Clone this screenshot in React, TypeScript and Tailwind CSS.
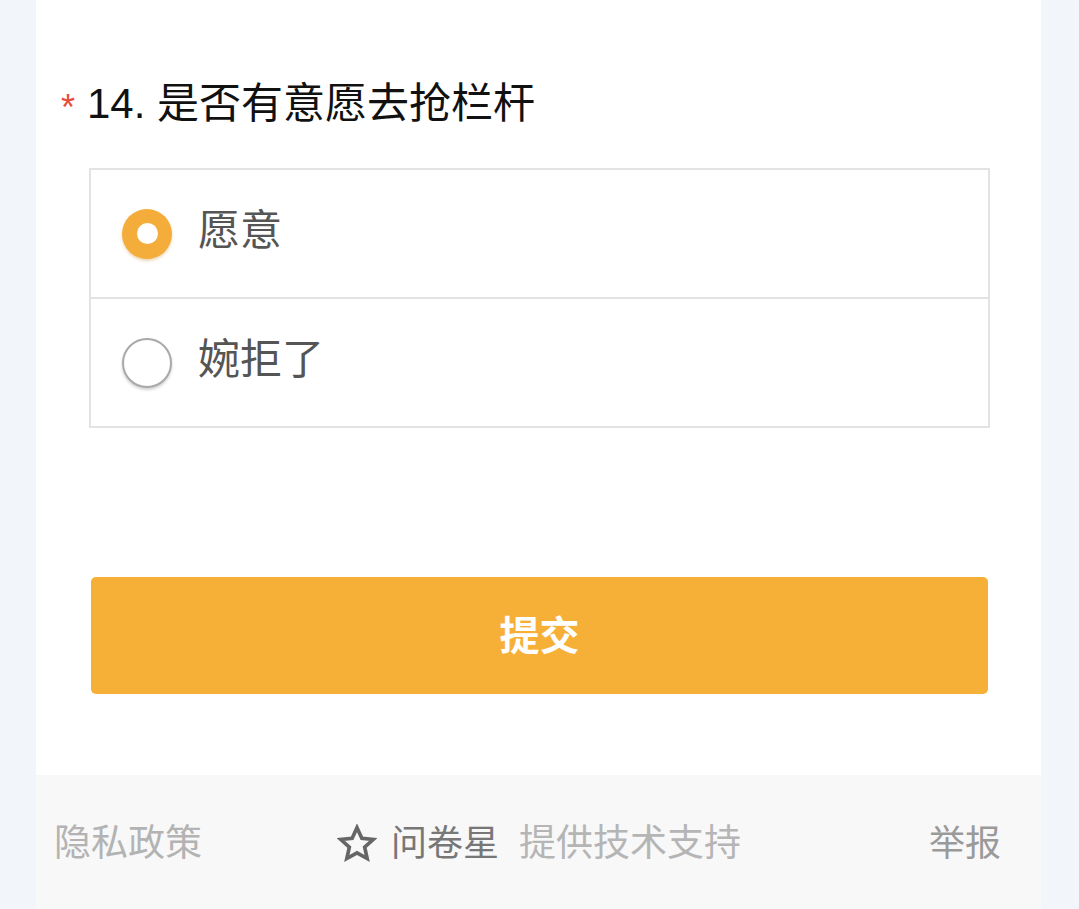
import React from "react";

const font = { fontFamily: '"Liberation Sans", "Noto Sans CJK SC", sans-serif' };

function Star() {
  return (
    <svg width="40" height="40" viewBox="0 0 24 24" className="shrink-0">
      <path
        d="M12 2.2l2.9 6.4 6.8.7-5.1 4.6 1.5 6.8L12 17.3l-6.1 3.4 1.5-6.8-5.1-4.6 6.8-.7z"
        fill="none"
        stroke="#666"
        strokeWidth="2.2"
        strokeLinejoin="miter"
      />
    </svg>
  );
}

export default function App() {
  return (
    <div className="w-[1079px] h-[909px] bg-[#f2f5f9] overflow-hidden" style={font}>
      <div className="ml-[36px] w-[1005px] h-[909px] bg-white flex flex-col">
        <div className="flex-1 flex flex-col">
          <div className="flex items-center pt-[80px] pl-[25px] h-[128px]">
            <span className="text-[36px] leading-none text-[#e84c3d] mr-[12px] mt-[8px]">*</span>
            <span className="text-[42px] leading-[48px] text-[#111]">14. 是否有意愿去抢栏杆</span>
          </div>
          <div className="ml-[53px] mt-[40px] w-[901px] border-2 border-[#e3e3e3]">
            <div className="h-[129px] flex items-center pl-[31px] border-b-2 border-[#e3e3e3]">
              <div className="w-[50px] h-[50px] rounded-full bg-[#f4ac3a] flex items-center justify-center shadow-[0_2px_3px_rgba(200,140,40,0.35)]">
                <div className="w-[21px] h-[21px] rounded-full bg-white" />
              </div>
              <span className="ml-[26px] mb-[6px] text-[42px] leading-none text-[#555]">愿意</span>
            </div>
            <div className="h-[127px] flex items-center pl-[31px]">
              <div className="w-[50px] h-[50px] rounded-full border-2 border-[#a9a9a9] bg-white shadow-[0_2px_3px_rgba(0,0,0,0.18)]" />
              <span className="ml-[26px] mb-[6px] text-[42px] leading-none text-[#555]">婉拒了</span>
            </div>
          </div>
          <button className="ml-[55px] mt-[149px] w-[897px] h-[117px] rounded-[5px] bg-[#f6b037] text-white text-[40px] font-bold flex items-center justify-center">
            提交
          </button>
        </div>
        <div className="h-[134px] bg-[#f8f8f8] flex items-center pl-[18px] pr-[40px] pt-[4px]">
          <span className="text-[37px] text-[#b3b3b3] whitespace-nowrap">隐私政策</span>
          <div className="flex items-center ml-[135px]">
            <Star />
            <span className="ml-[14px] text-[36px] text-[#777] whitespace-nowrap">问卷星</span>
            <span className="ml-[20px] text-[37px] text-[#b5b5b5] whitespace-nowrap">提供技术支持</span>
          </div>
          <span className="ml-auto text-[36px] text-[#9a9a9a] whitespace-nowrap">举报</span>
        </div>
      </div>
    </div>
  );
}
